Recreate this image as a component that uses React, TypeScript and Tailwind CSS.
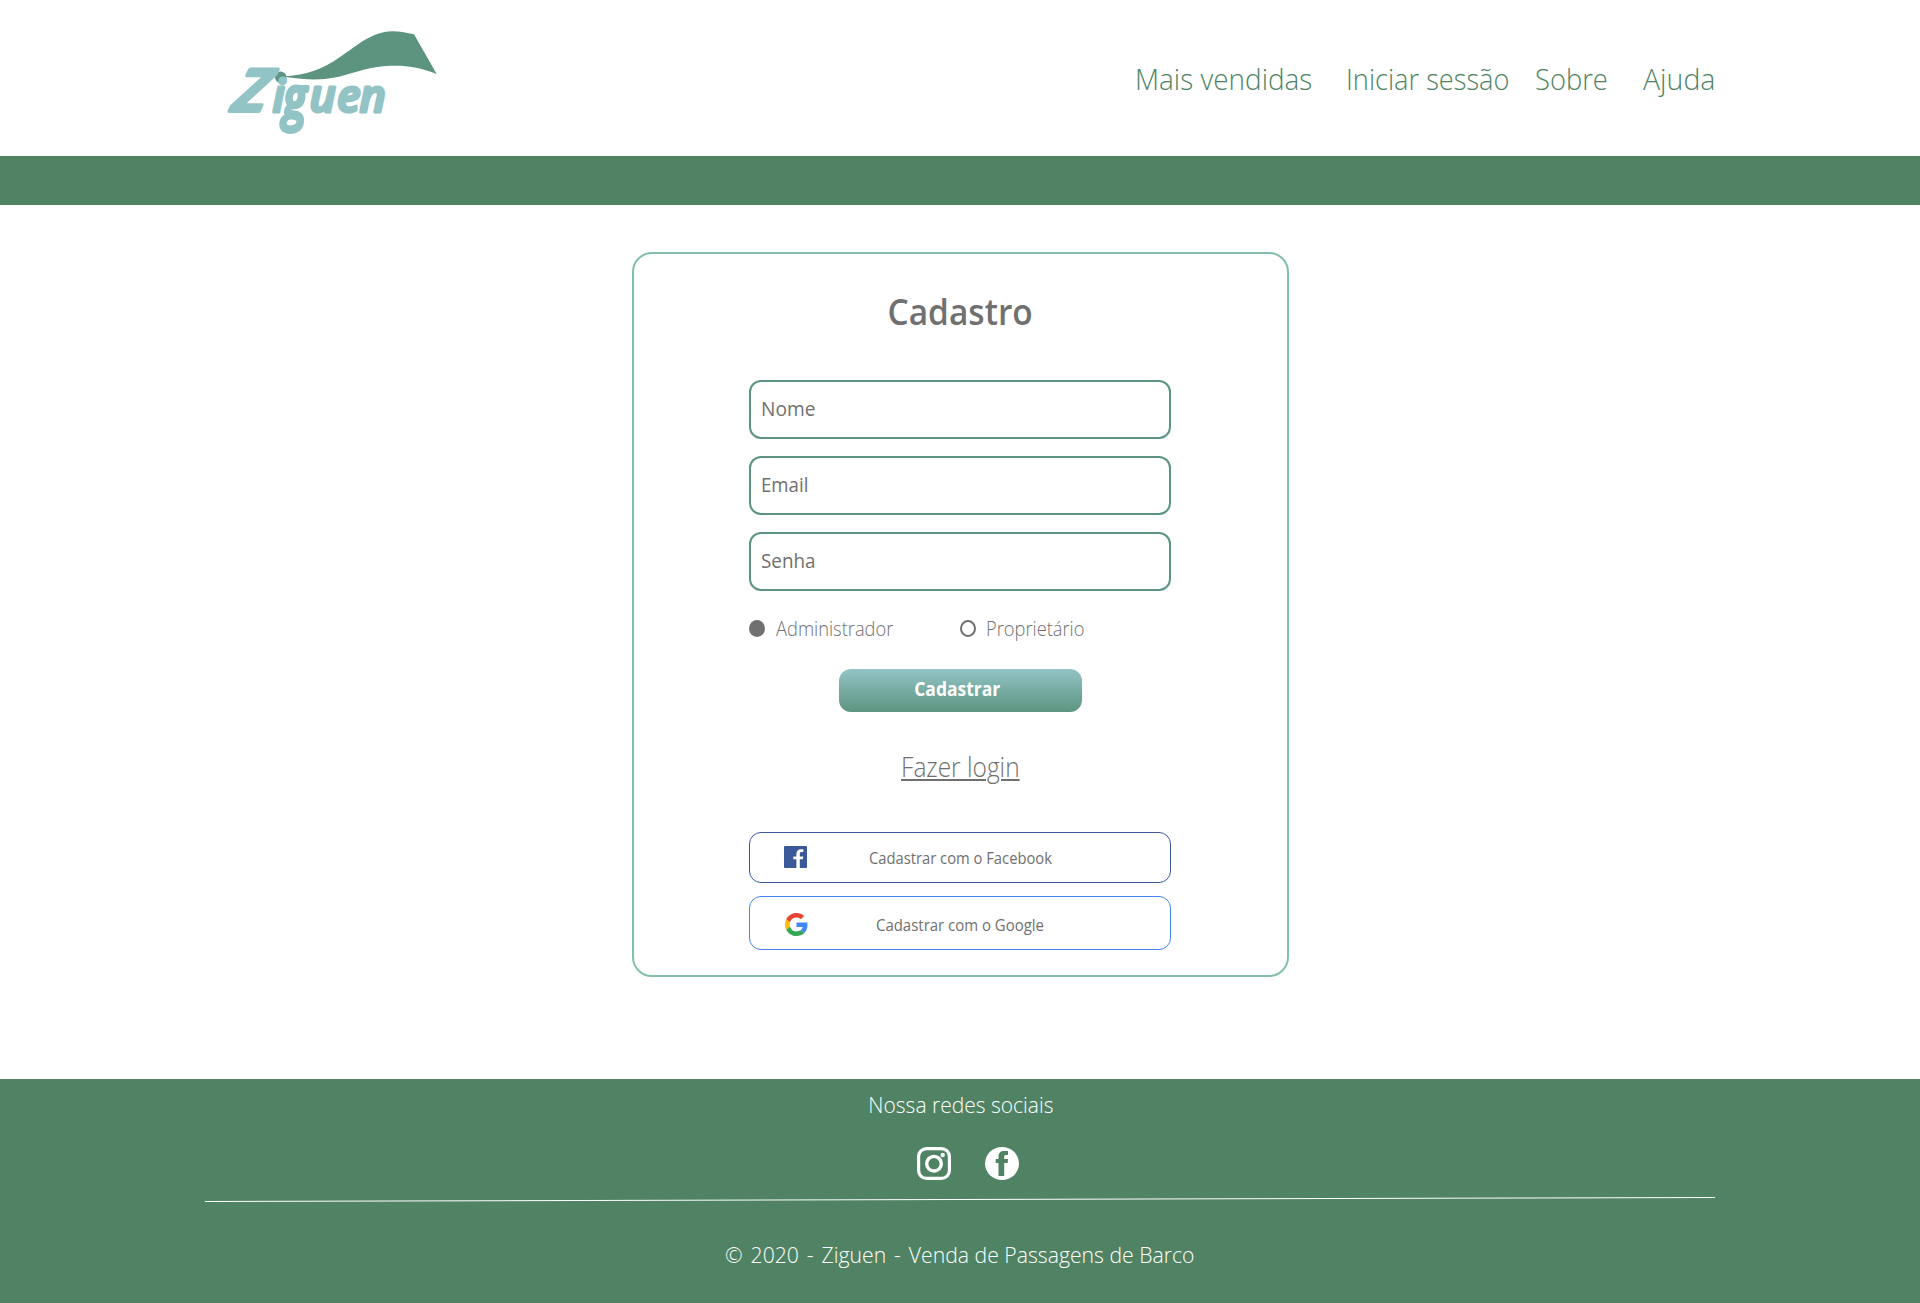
import React from "react";

const navItems = [
  { label: "Mais vendidas", box: "w-[211px]", fit: "scale-x-[.93]" },
  { label: "Iniciar sessão", box: "w-[189px]", fit: "scale-x-[.906]" },
  { label: "Sobre", box: "w-[108px]", fit: "scale-x-[.91]" },
  { label: "Ajuda", box: "w-[80px]", fit: "scale-x-[.95]" },
];

const fields = [
  { label: "Nome", fit: "scale-x-[.957]" },
  { label: "Email", fit: "scale-x-[.932]" },
  { label: "Senha", fit: "scale-x-[.942]" },
];

function Logo() {
  return (
    <svg className="ml-[220px] h-[125px] w-[225px]" viewBox="220 20 225 125" role="img">
      <path
        fill="#5c9480"
        d="M286 76.2C305 75 322 70 340 57C360 43.500 372 32 392 31.300C400 31.200 407 33 414 34.300L436.700 74C420 67.500 408 65.700 396.700 65.700C382 65.700 370 67.500 352 73C335 78.500 318 82 286 77Z"
      />
      <circle cx="280.700" cy="77.300" r="5.700" fill="#5c9480" />
      <g
        fill="#92c3c5"
        stroke="#92c3c5"
        strokeLinejoin="round"
        className="italic"
        fontFamily="Open Sans, sans-serif"
        fontWeight="600"
      >
        <text transform="translate(231 110.500) skewX(-14) scale(1.08 1)" fontSize="58" strokeWidth="4">Z</text>
        <text x="272.500" y="111.500" fontSize="44.500" strokeWidth="3">i</text>
        <text transform="translate(283 118) scale(1 1.300)" fontSize="44.500" strokeWidth="3">g</text>
        <text x="309.500 337 359.500" y="111.500" fontSize="44.500" strokeWidth="3">uen</text>
      </g>
    </svg>
  );
}

function FacebookSquare() {
  return (
    <svg className="h-[22px] w-[23px]" viewBox="0 0 23 22">
      <rect width="23" height="22" rx="1" fill="#3b5998" />
      <path fill="#fff" d="M12.400 22V13.300H9.300V10.500h3.100V8c0-3 1.800-4.800 4.600-4.800h2.300v2.900h-1.600c-1.400 0-1.900.6-1.900 1.900v2.500h3.400l-.4 2.800h-3V22z" />
    </svg>
  );
}

function GoogleMark() {
  return (
    <svg className="ml-px h-[23px] w-[22.500px]" viewBox="0 0 47 48" preserveAspectRatio="none">
      <path fill="#ea4335" d="M24 9.500c3.540 0 6.710 1.220 9.210 3.600l6.850-6.850C35.900 2.380 30.470 0 24 0 14.620 0 6.510 5.380 2.560 13.220l7.980 6.190C12.430 13.720 17.740 9.500 24 9.500z" />
      <path fill="#4285f4" d="M46.980 24.550c0-1.570-.15-3.090-.38-4.550H24v9.020h12.940c-.58 2.960-2.260 5.480-4.780 7.180l7.730 6c4.510-4.180 7.090-10.360 7.090-17.650z" />
      <path fill="#fbbc05" d="M10.530 28.590c-.48-1.450-.76-2.990-.76-4.590s.27-3.140.76-4.590l-7.980-6.190C.92 16.460 0 20.120 0 24c0 3.880.92 7.540 2.560 10.780l7.970-6.190z" />
      <path fill="#34a853" d="M24 48c6.480 0 11.930-2.130 15.890-5.810l-7.730-6c-2.150 1.450-4.920 2.300-8.160 2.300-6.260 0-11.570-4.220-13.470-9.910l-7.980 6.190C6.510 42.620 14.620 48 24 48z" />
    </svg>
  );
}

export default function App() {
  return (
    <div className="flex h-[1303px] w-[1920px] flex-col bg-white font-['Open_Sans',sans-serif] leading-none whitespace-nowrap text-[#707070]">
      <header className="flex h-[156px] shrink-0 items-start justify-between pt-5">
        <Logo />
        <nav className="mr-[197px] flex pt-11 text-[30px] font-light text-[#508364]">
          {navItems.map((n) => (
            <a key={n.label} className={n.box}>
              <span className={`inline-block origin-left ${n.fit}`}>{n.label}</span>
            </a>
          ))}
        </nav>
      </header>
      <div className="h-[49px] shrink-0 bg-[#508364]" />

      <main className="flex h-[874px] shrink-0 justify-center pt-[47px]">
        <form className="flex h-[725px] w-[657px] flex-col items-center rounded-[20px] border-2 border-[#83bfab]">
          <h1 className="mt-10 scale-x-[.93] text-4xl leading-none font-semibold">Cadastro</h1>
          <div className="mt-[50px] flex w-[422px] flex-col gap-[17px]">
            {fields.map((f) => (
              <div key={f.label} className="flex h-[59px] items-center rounded-xl border-2 border-[#5c9480] pb-px pl-2.5 text-xl leading-none">
                <span className={`inline-block origin-left ${f.fit}`}>{f.label}</span>
              </div>
            ))}
          </div>
          <div className="mt-[27px] flex h-5 w-[422px] items-center text-xl leading-none font-light">
            <span className="mt-px mr-[11px] h-[17px] w-4 rounded-[50%] bg-[#707070]" />
            <span className="w-[184px] pt-0.5">
              <span className="inline-block origin-left scale-x-[.915]">Administrador</span>
            </span>
            <span className="mt-px mr-2.5 h-[17px] w-4 rounded-[50%] border-2 border-[#707070]" />
            <span className="inline-block origin-left scale-x-[.914] pt-0.5">Proprietário</span>
          </div>
          <button
            type="button"
            className="mt-[31px] flex h-[43px] w-[243px] items-center justify-center rounded-xl bg-linear-to-b from-[#93c4c6] to-[#5c9480] pr-1.5 pb-1 text-xl leading-none font-bold text-white"
          >
            <span className="scale-x-[.874]">Cadastrar</span>
          </button>
          <a className="mt-[41px] scale-x-[.907] text-[27px] font-light underline decoration-2 underline-offset-2">Fazer login</a>
          <div className="mt-[52px] grid h-[51px] w-[422px] grid-cols-[100px_1fr_100px] items-center rounded-xl border border-[#3b5998]">
            <span className="pb-px pl-[34px]"><FacebookSquare /></span>
            <span className="ml-px scale-x-[.922] text-center text-base leading-none">Cadastrar com o Facebook</span>
          </div>
          <div className="mt-[13px] grid h-[54px] w-[422px] grid-cols-[100px_1fr_100px] items-center rounded-xl border border-[#4285f4]">
            <span className="pt-[3px] pl-[34px]"><GoogleMark /></span>
            <span className="scale-x-[.935] pt-1 text-center text-base leading-none">Cadastrar com o Google</span>
          </div>
        </form>
      </main>

      <footer className="flex grow flex-col items-center bg-[#508364] text-[22px] font-light text-white">
        <p className="mt-3.5 ml-0.5 scale-x-[.955]">Nossa redes sociais</p>
        <div className="mt-8 flex gap-[34px] pl-4">
          <svg className="h-[33px] w-[34px]" viewBox="0 0 34 33" fill="none" stroke="#fff">
            <rect x="1.600" y="1.600" width="30.800" height="29.800" rx="8" strokeWidth="3.200" />
            <circle cx="17" cy="16.700" r="7.300" strokeWidth="3.400" />
            <circle cx="25.700" cy="8" r="2.200" fill="#fff" stroke="none" />
          </svg>
          <svg className="h-[33px] w-[34px]" viewBox="0 0 34 33">
            <ellipse cx="17" cy="16.500" rx="17" ry="16.500" fill="#fff" />
            <path fill="#508364" d="M13.500 29V16h-2.800v-4h2.800V9.500C13.500 6 15.500 4 19 4h4v4h-2c-1.300 0-1.800.6-1.800 1.800V12H23l-.3 4h-3.500v13z" />
          </svg>
        </div>
        <svg className="mt-4 h-[7px] w-[1510px]" viewBox="0 0 1510 7">
          <line x1="0" y1="5.500" x2="1510" y2="1.500" stroke="#fff" />
        </svg>
        <p className="mt-10 scale-x-[.963]">
          <span className="[word-spacing:2.5px]">© 2020 - Ziguen - </span>Venda de Passagens de Barco
        </p>
      </footer>
    </div>
  );
}
